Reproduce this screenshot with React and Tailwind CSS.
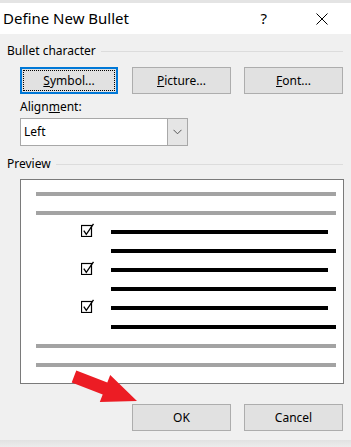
const ROWS = [
  { kind: 'gray' },
  { kind: 'gray' },
  { kind: 'black', short: true, box: true },
  { kind: 'black' },
  { kind: 'black', short: true, box: true },
  { kind: 'black' },
  { kind: 'black', short: true, box: true },
  { kind: 'black' },
  { kind: 'gray' },
  { kind: 'gray' },
];

function CheckGlyph() {
  return (
    <svg width="14" height="14" viewBox="0 0 14 14" className="block">
      <rect x="0.5" y="2.5" width="10" height="11" fill="none" stroke="#000" strokeWidth="1.2" />
      <path d="M2.8 7.6 L5.3 11.4 L12.5 0.8" fill="none" stroke="#000" strokeWidth="1.3" />
    </svg>
  );
}

function Legend({ children }) {
  return (
    <div className="flex items-center h-[14px] pl-[7px] pr-[8px]">
      <span className="text-[12px] leading-[14px] text-black">{children}</span>
      <div className="flex-1 h-px bg-[#dcdcdc] ml-[5px]" />
    </div>
  );
}

function Btn({ children, w = 'w-[99px]', focus }) {
  if (focus) {
    return (
      <div className={`${w} h-[27px] border-2 border-[#0078d7] bg-[#e1e1e1] p-[1px]`}>
        <div className="h-full border border-dotted border-black flex items-center justify-center text-[12px] text-black">
          {children}
        </div>
      </div>
    );
  }
  return (
    <div className={`${w} h-[27px] border border-[#adadad] bg-[#e1e1e1] flex items-center justify-center text-[12px] text-black`}>
      {children}
    </div>
  );
}

export default function App() {
  return (
    <div className="w-[351px] h-[447px] bg-[#f0f0f0] relative overflow-hidden font-['Segoe_UI','Noto_Sans',sans-serif]">
      <div className="h-[3px] bg-[#e4e4e4]" />
      <div className="h-[31px] bg-white flex items-center pl-[3px]">
        <span className="text-[15px] text-black">Define New Bullet</span>
        <div className="flex-1" />
        <span className="text-[15px] text-black">?</span>
        <svg width="12" height="12" viewBox="0 0 12 12" className="ml-[49px] mr-[23px]">
          <path d="M0.5 0.5 L11.5 11.5 M11.5 0.5 L0.5 11.5" stroke="#000" strokeWidth="1" />
        </svg>
      </div>

      <div className="mt-[10px]">
        <Legend>Bullet character</Legend>
      </div>
      <div className="flex pl-[20px] mt-[9px] gap-[14px]">
        <Btn w="w-[98px]" focus>
          <span><u>S</u>ymbol...</span>
        </Btn>
        <Btn>
          <span><u>P</u>icture...</span>
        </Btn>
        <div className="-ml-[1px]">
          <Btn>
            <span><u>F</u>ont...</span>
          </Btn>
        </div>
      </div>
      <div className="pl-[20px] mt-[6px] text-[12px] leading-[14px] text-black">
        Align<u>m</u>ent:
      </div>
      <div className="ml-[20px] mt-[4px] w-[168px] h-[28px] border border-[#a8a8a8] bg-white flex">
        <div className="flex-1 flex items-center pl-[3px] text-[12px] text-black">Left</div>
        <div className="w-[20px] bg-[#e5e5e5] border-l border-[#a8a8a8] flex items-center justify-center">
          <svg width="9" height="6" viewBox="0 0 9 6">
            <path d="M0.5 0.8 L4.5 4.8 L8.5 0.8" fill="none" stroke="#555" strokeWidth="1" />
          </svg>
        </div>
      </div>

      <div className="mt-[11px]">
        <Legend>Preview</Legend>
      </div>
      <div className="ml-[20px] mt-[8px] w-[324px] h-[205px] border border-[#7a7a7a] bg-white pt-[5px] pl-[15px] pr-[7px]">
        {ROWS.map((r, i) => (
          <div key={i} className="h-[19px] flex items-start">
            {r.kind === 'gray' ? (
              <div className="flex-1 h-[4px] mt-[7px] bg-[#a3a3a3]" />
            ) : (
              <>
                <div className="w-[75px] pl-[45px]">{r.box && <CheckGlyph />}</div>
                <div className={`${r.short ? 'w-[217px]' : 'flex-1'} h-[4px] mt-[7px] bg-black`} />
              </>
            )}
          </div>
        ))}
      </div>

      <div className="flex justify-end gap-[13px] pr-[8px] mt-[20px]">
        <Btn>OK</Btn>
        <Btn>Cancel</Btn>
      </div>
      <div className="absolute left-0 right-0 bottom-0 h-[7px] bg-gradient-to-b from-[#e2e2e2] to-[#ececec]" />

      <svg width="351" height="447" className="absolute left-0 top-0 pointer-events-none">
        <polygon
          points="76.3,370.4 107.3,382.4 110.2,375.1 137,401 99.8,401.9 102.7,394.6 71.7,382.6"
          fill="#ec1c24"
        />
      </svg>
    </div>
  );
}
